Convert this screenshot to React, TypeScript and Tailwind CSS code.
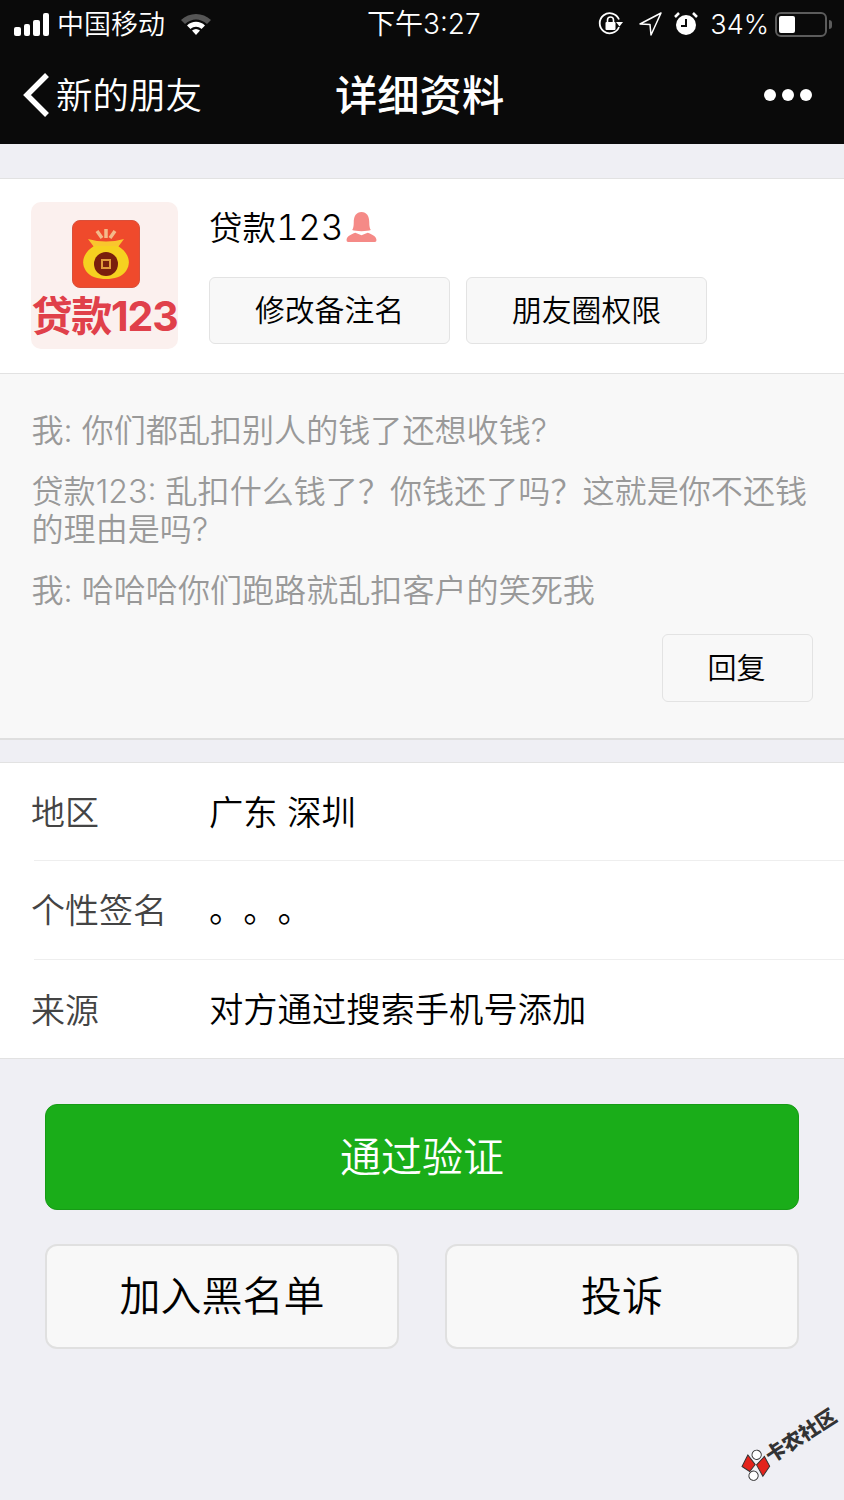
import React from 'react';

function StatusBar() {
  return (
    <div className="relative flex h-12 items-center justify-between pl-[14px] pr-[12px] text-white">
      <div className="flex items-center">
        {/* signal */}
        <div className="flex items-end gap-[3px]">
          <div className="h-[9px] w-[6.500px] rounded-[2px] bg-white" />
          <div className="h-[12px] w-[6.500px] rounded-[2px] bg-white" />
          <div className="h-[16px] w-[6.500px] rounded-[2px] bg-white" />
          <div className="h-[23px] w-[6.500px] rounded-[2px] bg-white" />
        </div>
        <span className="ml-[8px] text-[27px] font-[350] leading-none">中国移动</span>
        <svg className="ml-[15px]" width="32" height="24" viewBox="0 0 32 24">
          <path d="M1 8 C9 0 23 0 31 8 L27 12 C20 6 12 6 5 12 Z" fill="#555" />
          <path d="M7 13.500 C12 8.500 20 8.500 25 13.500 L21.500 17 C18 14 14 14 10.500 17 Z" fill="#fff" />
          <path d="M12 18.500 C14.500 16.500 17.500 16.500 20 18.500 L16 23 Z" fill="#fff" />
        </svg>
      </div>
      <span className="absolute left-[367px] top-[8px] text-[28px] font-[350] leading-[32px]">下午3:27</span>
      <div className="flex items-center">
        {/* rotation lock */}
        <svg width="28" height="28" viewBox="0 0 28 28" fill="none">
          <path d="M22 17 A10 10 0 1 1 22 9.500" stroke="#fff" strokeWidth="1.800" />
          <path d="M19 12 L26 12 L22.500 16.500 Z" fill="#fff" />
          <rect x="8.500" y="12" width="10" height="8" rx="1" fill="#fff" />
          <path d="M10.500 12 V10 A3 3 0 0 1 16.500 10 V12" stroke="#fff" strokeWidth="1.600" />
        </svg>
        {/* location */}
        <svg className="ml-[12px]" width="26" height="26" viewBox="0 0 26 26" fill="none">
          <path d="M24 2 L3 13 L13 13.500 L14 24 Z" stroke="#fff" strokeWidth="1.500" strokeLinejoin="round" />
        </svg>
        {/* alarm */}
        <svg className="ml-[10px]" width="26" height="26" viewBox="0 0 26 26">
          <circle cx="13" cy="14" r="10" fill="#fff" />
          <path d="M13 8 V15 H8" stroke="#0a0a0a" strokeWidth="2" fill="none" />
          <path d="M2 6 L6 2 M24 6 L20 2" stroke="#fff" strokeWidth="2.500" />
        </svg>
        <span className="ml-[11px] text-[27px] font-[350] leading-none">34%</span>
        <div className="ml-[6px] flex h-[25px] w-[52px] items-center rounded-[6px] border-2 border-[#5c5c5c] px-[2px]">
          <div className="h-[17px] w-[16px] rounded-[2px] bg-white" />
        </div>
        <div className="ml-[2px] h-[9px] w-[3px] rounded-r-full bg-[#5c5c5c]" />
      </div>
    </div>
  );
}

function NavBar() {
  return (
    <div className="relative flex h-24 items-center justify-between pb-[2px] pl-[22px] pr-[32px] text-white">
      <div className="flex items-center">
        <svg width="28" height="46" viewBox="0 0 28 46" fill="none">
          <path d="M25 3 L5 23 L25 43" stroke="#fff" strokeWidth="5.500" />
        </svg>
        <span className="ml-[6px] pt-[2px] text-[36.500px] font-[350] leading-none">新的朋友</span>
      </div>
      <span className="absolute left-[335px] top-[24px] text-[42.300px] font-medium leading-[48px]">详细资料</span>
      <div className="flex gap-[6px]">
        <div className="h-[12px] w-[12px] rounded-full bg-white" />
        <div className="h-[12px] w-[12px] rounded-full bg-white" />
        <div className="h-[12px] w-[12px] rounded-full bg-white" />
      </div>
    </div>
  );
}

function Avatar() {
  return (
    <div className="flex h-[147px] w-[147px] shrink-0 flex-col items-center overflow-hidden rounded-[10px] bg-[#fbf0ee] pt-[18px]">
      <div className="ml-[2px] flex h-[68px] w-[68px] items-center justify-center rounded-[8px] border border-[#d9503a] bg-[#ef4a2c]">
        <svg width="48" height="56" viewBox="0 0 48 56">
          <path d="M15 5 L20 12 M24 3 V12 M33 5 L28 12" stroke="#f3b98a" strokeWidth="3.500" />
          <path d="M6 13 Q24 18 42 13 L36 21 H12 Z" fill="#f9c62e" />
          <path d="M12 20 H36 C46 26 50 36 44 45 C40 51 32 53 24 53 C16 53 8 51 4 45 C-2 36 2 26 12 20 Z" fill="#f6d120" />
          <circle cx="24" cy="38" r="12" fill="#7a1f0d" />
          <rect x="19" y="33" width="10" height="10" fill="#e09a3a" />
          <rect x="21" y="35" width="6" height="6" fill="#7a1f0d" />
        </svg>
      </div>
      <span className="mt-[3px] whitespace-nowrap text-[41px] font-bold leading-[50px] tracking-[-1.200px] text-[#e0404a]">贷款123</span>
    </div>
  );
}

function SmallButton({ label, className }: { label: string; className: string }) {
  return (
    <div className={`flex items-center justify-center rounded-[6px] border border-[#e3e3e3] bg-[#f8f8f8] text-black ${className}`}>
      {label}
    </div>
  );
}

function InfoRow({ label, value, className }: { label: string; value: string; className: string }) {
  return (
    <div className={`ml-[34px] flex items-center ${className}`}>
      <span className="-ml-[3px] w-[178px] shrink-0 text-[34px] font-[350] text-[#444]">{label}</span>
      <span className="whitespace-nowrap text-[34.300px] font-[350] text-black [text-spacing-trim:space-all]">{value}</span>
    </div>
  );
}

export default function App() {
  return (
    <div className="relative h-[1500px] w-[844px] overflow-hidden bg-[#efeff4] font-['Inter','Noto_Sans_CJK_SC',sans-serif]">
      <div className="bg-[#0a0a0a]">
        <StatusBar />
        <NavBar />
      </div>

      {/* Profile */}
      <div className="mt-[34px] flex h-[196px] border-y border-[#e2e2e2] bg-white pl-[31px] pt-[23px]">
        <Avatar />
        <div className="ml-[31px]">
          <div className="flex h-[50px] items-center">
            <span className="pt-[2px] text-[33.500px] font-[350] leading-none text-black">
              贷款<span className="text-[35px] tabular-nums tracking-[-0.300px]">123</span>
            </span>
            <svg className="ml-[3px]" width="31" height="30" viewBox="0 0 30 29">
              <path d="M15 0 C10 0 7.500 4 7.500 10 C7.500 14 7 16 6 17.500 C9 19 21 19 24 17.500 C23 16 22.500 14 22.500 10 C22.500 4 20 0 15 0 Z" fill="#f58a87" />
              <path d="M0.500 27 C1 23 5 21.500 9 20 L15 22.500 L21 20 C25 21.500 29 23 29.500 27 Q29.500 29 28 29 H2 Q0.500 29 0.500 27 Z" fill="#f58a87" />
            </svg>
          </div>
          <div className="mt-[25px] flex gap-[16px] text-[29.800px] font-[350]">
            <SmallButton label="修改备注名" className="h-[67px] w-[241px]" />
            <SmallButton label="朋友圈权限" className="h-[67px] w-[241px]" />
          </div>
        </div>
      </div>

      {/* Greeting messages */}
      <div className="h-[366px] border-b-2 border-[#dfdfdf] bg-[#f8f8f8] pl-[31.500px] pr-[31px] pt-[38px] text-[32.100px] font-[350] leading-[38px] text-[#999]">
        <p>我: 你们都乱扣别人的钱了还想收钱?</p>
        <p className="mt-[23px]">贷款123: 乱扣什么钱了？你钱还了吗？这就是你不还钱的理由是吗?</p>
        <p className="mt-[23px]">我: 哈哈哈你们跑路就乱扣客户的笑死我</p>
        <div className="mt-[24px] flex justify-end">
          <SmallButton label="回复" className="h-[68px] w-[151px] pt-[1px] pr-[2px] text-[29px]" />
        </div>
      </div>

      {/* Details */}
      <div className="mt-[22px] h-[297px] border-y border-[#e2e2e2] bg-white">
        <InfoRow label="地区" value="广东 深圳" className="h-[98px] border-b border-[#eee] pt-[2px]" />
        <InfoRow label="个性签名" value="。。。" className="h-[99px] border-b border-[#eee]" />
        <InfoRow label="来源" value="对方通过搜索手机号添加" className="h-[98px] pt-[2px]" />
      </div>

      {/* Actions */}
      <div className="px-[45px] pt-[45px]">
        <div className="flex h-[106px] items-center justify-center rounded-[12px] border border-[#179b16] bg-[#1aad19] pt-[1px] text-[41px] font-[350] text-white">
          通过验证
        </div>
        <div className="mt-[34px] flex gap-[46px]">
          <div className="flex h-[105px] flex-1 items-center justify-center rounded-[12px] border-2 border-[#e0e0e0] bg-[#f8f8f8] text-[41px] font-[350] text-black">
            加入黑名单
          </div>
          <div className="flex h-[105px] flex-1 items-center justify-center rounded-[12px] border-2 border-[#e0e0e0] bg-[#f8f8f8] text-[41px] font-[350] text-black">
            投诉
          </div>
        </div>
      </div>

      {/* Watermark */}
      <div className="absolute left-[744px] top-[1459px] flex origin-left -rotate-[33deg] items-center">
        <svg width="28" height="28" viewBox="0 0 30 30">
          <path d="M2 8 L14 1 L15 14 L6 17 Z M16 15 L28 12 L27 24 L15 29 Z" fill="#e3231c" stroke="#333" />
          <circle cx="22" cy="6" r="5" fill="#fff" stroke="#333" />
          <circle cx="7" cy="23" r="5" fill="#fff" stroke="#333" />
        </svg>
        <span className="whitespace-nowrap text-[20px] font-black leading-none text-[#333]">卡农社区</span>
      </div>
    </div>
  );
}
